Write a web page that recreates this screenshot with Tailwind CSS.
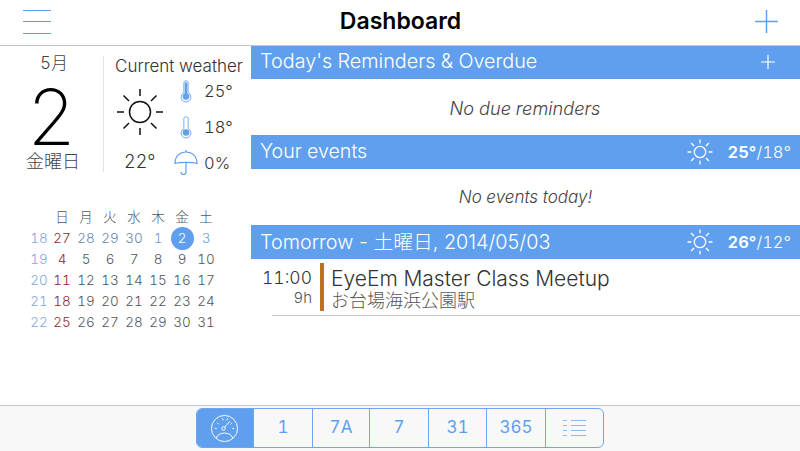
<!DOCTYPE html>
<html lang="en">
<head>
<meta charset="UTF-8">
<title>Dashboard</title>
<script src="https://cdn.jsdelivr.net/npm/@tailwindcss/browser@4"></script>
</head>
<body class="bg-white">
<div class="w-[800px] h-[451px] overflow-hidden flex flex-col font-['Inter','Noto_Sans_CJK_JP',sans-serif] font-light tabular-nums text-[#333]">

  <!-- top bar -->
  <header class="h-[46px] shrink-0 flex items-center justify-between border-b border-[#c4c4c4] pl-[23px] pr-[22px]">
    <div class="w-[28px] flex flex-col gap-[10.500px] -mt-[2px]">
      <div class="h-px bg-[#5f9fee]"></div>
      <div class="h-px bg-[#5f9fee]"></div>
      <div class="h-px bg-[#5f9fee]"></div>
    </div>
    <h1 class="text-[23px] font-semibold text-black mr-[5px] -mt-[2px]">Dashboard</h1>
    <svg class="w-[23px] h-[23px] -mt-[2px]" viewBox="0 0 23 23" fill="none" stroke="#5f9fee" stroke-width="1.5"><path d="M11.5 0V23M0 11.5H23"/></svg>
  </header>

  <main class="flex-1 flex min-h-0">
    <!-- left column -->
    <aside class="w-[251px] shrink-0 flex flex-col">
      <div class="flex pt-[10px]">
        <div class="w-[104px] h-[116px] flex flex-col items-center border-r border-[#e2e2e2]">
          <div class="text-[17px] leading-[18px] text-[#444] pl-[5px] -mt-[2px]">5月</div>
          <div class="text-[77px] leading-[72px] mt-[9px] text-black font-extralight">2</div>
          <div class="text-[18px] leading-[20px] text-[#444] -mt-[1px] pl-[3px]">金曜日</div>
        </div>
        <div class="flex-1 pl-[11px] min-w-0">
          <div class="text-[17px] leading-[20px] whitespace-nowrap">Current weather</div>
          <div class="flex -mt-[3px]">
            <div class="w-[59px] flex flex-col">
              <svg class="w-[48px] h-[48px] ml-[1px] mt-[15px]" viewBox="0 0 48 48" fill="none" stroke="#111" stroke-width="1.5"><circle cx="24" cy="24" r="10.5"/><path d="M24 1V8M24 40V47M1 24H8M40 24H47M7.5 7.5L13 13M35 35L40.500 40.500M7.500 40.500L13 35M35 13L40.500 7.500"/></svg>
              <div class="text-[18px] leading-[20px] mt-[16px] pl-[9px]">22°</div>
            </div>
            <div class="flex flex-col">
              <div class="flex items-center h-[36px]">
                <svg class="w-[12px] h-[26px] ml-[6px]" viewBox="0 0 14 26" fill="none" stroke="#5f9fee" stroke-width="1"><path d="M4.500 15V3.500a2.500 2.500 0 0 1 5 0V15a5.700 5.700 0 1 1-5 0Z"/><circle cx="7" cy="19.500" r="3.800" fill="#5f9fee" stroke="none"/><path d="M7 3V18" stroke-width="3"/></svg>
                <span class="text-[16.500px] ml-[12px] pt-[1px]">25°</span>
              </div>
              <div class="flex items-center h-[36px]">
                <svg class="w-[12px] h-[26px] ml-[6px]" viewBox="0 0 14 26" fill="none" stroke="#5f9fee" stroke-width="1"><path d="M4.500 15V3.500a2.500 2.500 0 0 1 5 0V15a5.700 5.700 0 1 1-5 0Z"/><circle cx="7" cy="19.500" r="3.800" fill="#5f9fee" stroke="none"/></svg>
                <span class="text-[16.500px] ml-[12px] pt-[1px]">18°</span>
              </div>
              <div class="flex items-center h-[36px]">
                <svg class="w-[24px] h-[26px]" viewBox="0 0 24 26" fill="none" stroke="#5f9fee" stroke-width="1.200"><path d="M1 13.500C1 6 6 2 12 2s11 4 11 11.500C19 12 5 12 1 13.500Z"/><path d="M12 0V2M12 12.500V22a2.500 2.500 0 0 1-5 0"/></svg>
                <span class="text-[16.500px] ml-[6px] pt-[1px]">0%</span>
              </div>
            </div>
          </div>
        </div>
      </div>

      <!-- month calendar -->
      <div class="grid grid-cols-[22px_repeat(7,24px)] auto-rows-[21px] ml-[28px] mt-[26px] text-[13.500px] text-center items-center text-[#555]">
        <span></span><span>日</span><span>月</span><span>火</span><span>水</span><span>木</span><span>金</span><span>土</span>
        <span class="text-[#7fa9dc]">18</span><span class="text-[#8e2a2a]">27</span><span class="text-[#6d86a8]">28</span><span class="text-[#6d86a8]">29</span><span class="text-[#6d86a8]">30</span><span class="text-[#6d9fdc]">1</span><span class="flex justify-center"><span class="w-[23px] h-[23px] rounded-full bg-[#5f9fee] text-white flex items-center justify-center">2</span></span><span class="text-[#6d9fdc]">3</span>
        <span class="text-[#7fa9dc]">19</span><span class="text-[#8e2a2a]">4</span><span>5</span><span>6</span><span>7</span><span>8</span><span>9</span><span>10</span>
        <span class="text-[#7fa9dc]">20</span><span class="text-[#8e2a2a]">11</span><span>12</span><span>13</span><span>14</span><span>15</span><span>16</span><span>17</span>
        <span class="text-[#7fa9dc]">21</span><span class="text-[#8e2a2a]">18</span><span>19</span><span>20</span><span>21</span><span>22</span><span>23</span><span>24</span>
        <span class="text-[#7fa9dc]">22</span><span class="text-[#8e2a2a]">25</span><span>26</span><span>27</span><span>28</span><span>29</span><span>30</span><span>31</span>
      </div>
    </aside>

    <!-- right column -->
    <section class="flex-1 min-w-0">
      <div class="h-[33px] bg-[#5f9fee] text-white flex items-center justify-between pl-[9px] pr-[25px] pb-[2px]">
        <span class="text-[19.800px]">Today's Reminders &amp; Overdue</span>
        <svg class="w-[14px] h-[14px]" viewBox="0 0 14 14" fill="none" stroke="#fff" stroke-width="1.200"><path d="M7 0V14M0 7H14"/></svg>
      </div>
      <div class="h-[56px] flex items-center justify-center text-[18.200px] italic text-[#444] pt-[3px] pr-[1px]">No due reminders</div>
      <div class="h-[34px] bg-[#5f9fee] text-white flex items-center justify-between pl-[9px] pr-[9px]">
        <span class="text-[19.600px]">Your events</span>
        <div class="flex items-center gap-[14px]">
          <svg class="w-[26px] h-[26px]" viewBox="0 0 48 48" fill="none" stroke="#fff" stroke-width="2.400"><circle cx="24" cy="24" r="10.500"/><path d="M24 1V8M24 40V47M1 24H8M40 24H47M7.500 7.500L13 13M35 35L40.500 40.500M7.500 40.500L13 35M35 13L40.500 7.500"/></svg>
          <span class="text-[16.500px]"><b class="font-semibold">25°</b>/18°</span>
        </div>
      </div>
      <div class="h-[56px] flex items-center justify-center text-[17px] italic text-[#444] pt-[2px]">No events today!</div>
      <div class="h-[34px] bg-[#5f9fee] text-white flex items-center justify-between pl-[9px] pr-[9px]">
        <span class="text-[19.800px] normal-nums pt-[1px]">Tomorrow - 土曜日, 2014/05/03</span>
        <div class="flex items-center gap-[14px]">
          <svg class="w-[26px] h-[26px]" viewBox="0 0 48 48" fill="none" stroke="#fff" stroke-width="2.400"><circle cx="24" cy="24" r="10.500"/><path d="M24 1V8M24 40V47M1 24H8M40 24H47M7.500 7.500L13 13M35 35L40.500 40.500M7.500 40.500L13 35M35 13L40.500 7.500"/></svg>
          <span class="text-[16.500px]"><b class="font-semibold">26°</b>/12°</span>
        </div>
      </div>
      <div class="ml-[21px] border-b border-[#c8c8c8] h-[57px] flex pt-[3px]">
        <div class="w-[40px] text-right mt-[4px]">
          <div class="text-[17.500px] leading-[24px] -ml-[10px]">11:00</div>
          <div class="text-[15px] leading-[16px] text-[#555]">9h</div>
        </div>
        <div class="w-[4px] h-[48px] bg-[#b8731f] mt-[1px] ml-[8px]"></div>
        <div class="ml-[7px] mt-[4px]">
          <div class="text-[21px] leading-[25px] whitespace-nowrap">EyeEm Master Class Meetup</div>
          <div class="text-[18px] leading-[20px] text-[#555]">お台場海浜公園駅</div>
        </div>
      </div>
    </section>
  </main>

  <!-- view switcher -->
  <footer class="h-[46px] shrink-0 bg-[#f8f8f8] border-t border-[#c4c4c4] flex justify-center pt-[2px]">
    <div class="w-[408px] h-[40px] flex rounded-[6px] border border-[#6da6ee] overflow-hidden text-[17px] text-[#5f9fee] font-normal">
      <div class="w-[56px] bg-[#5f9fee] flex items-center justify-center pr-[2px]">
        <svg class="w-[29px] h-[29px]" viewBox="0 0 30 30" fill="none" stroke="#fff" stroke-width="1"><circle cx="15" cy="15" r="13.500"/><path d="M6.500 25C8 18 22 18 23.500 25"/><circle cx="14" cy="15" r="1.800"/><path d="M15.200 13.800L20.500 7.500M5 15H7M7.500 9L9 10.500M13 4.500L13.500 6.500M18 4.500L17.500 6.500M25 15H23M22.500 9.500L21 10.800"/></svg>
      </div>
      <div class="w-[59px] border-l border-[#6da6ee] flex items-center justify-center">1</div>
      <div class="w-[57px] border-l border-[#6da6ee] flex items-center justify-center">7A</div>
      <div class="w-[59px] border-l border-[#6da6ee] flex items-center justify-center">7</div>
      <div class="w-[58px] border-l border-[#6da6ee] flex items-center justify-center">31</div>
      <div class="w-[59px] border-l border-[#6da6ee] flex items-center justify-center">365</div>
      <div class="flex-1 border-l border-[#6da6ee] flex items-center justify-center">
        <svg class="w-[23px] h-[16px]" viewBox="0 0 23 16" fill="none" stroke="#8db9f0" stroke-width="1"><path d="M8 .5H23M8 5.500H23M8 10.500H23M8 15.500H23M0 .5H4M0 5.500H4M0 10.500H4M0 15.500H4"/></svg>
      </div>
    </div>
  </footer>
</div>
</body>
</html>
